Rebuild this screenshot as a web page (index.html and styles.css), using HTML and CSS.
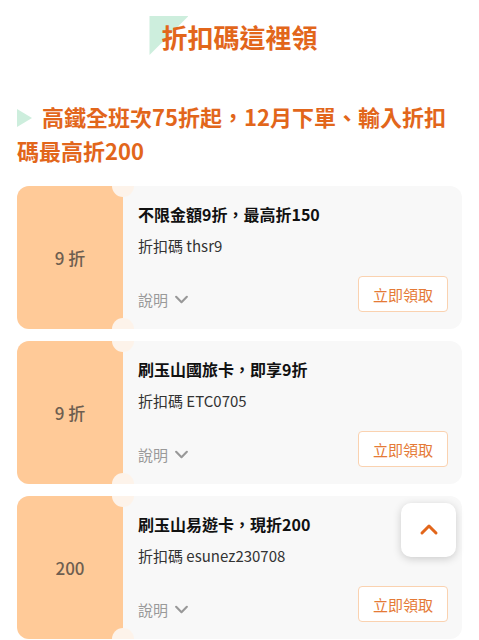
FILE: index.html
```html
<!DOCTYPE html>
<html lang="zh-Hant">
<head>
  <meta charset="UTF-8" />
  <meta name="viewport" content="width=device-width, initial-scale=1.0"/>
  <title>折扣碼這裡領</title>
  <link rel="stylesheet" href="styles.css">
</head>
<body>
  <h1 class="page-title"><span class="title-text">折扣碼這裡領</span></h1>

  <h2 class="promo"><span class="promo-mark"></span>高鐵全班次75折起，12月下單、輸入折扣碼最高折200</h2>

  <div class="coupons">
    <div class="coupon">
      <div class="coupon-value">9 折</div>
      <div class="coupon-body">
        <div class="coupon-name">不限金額9折，最高折150</div>
        <div class="coupon-code">折扣碼 thsr9</div>
        <div class="coupon-foot">
          <span class="more">說明
            <svg width="15" height="15" viewBox="0 0 14 14"><path d="M2 4.5l5 5 5-5" fill="none" stroke="#999" stroke-width="2" stroke-linecap="round" stroke-linejoin="round"/></svg>
          </span>
          <button class="claim">立即領取</button>
        </div>
      </div>
    </div>

    <div class="coupon">
      <div class="coupon-value">9 折</div>
      <div class="coupon-body">
        <div class="coupon-name">刷玉山國旅卡，即享9折</div>
        <div class="coupon-code">折扣碼 ETC0705</div>
        <div class="coupon-foot">
          <span class="more">說明
            <svg width="15" height="15" viewBox="0 0 14 14"><path d="M2 4.5l5 5 5-5" fill="none" stroke="#999" stroke-width="2" stroke-linecap="round" stroke-linejoin="round"/></svg>
          </span>
          <button class="claim">立即領取</button>
        </div>
      </div>
    </div>

    <div class="coupon">
      <div class="coupon-value">200</div>
      <div class="coupon-body">
        <div class="coupon-name">刷玉山易遊卡，現折200</div>
        <div class="coupon-code">折扣碼 esunez230708</div>
        <div class="coupon-foot">
          <span class="more">說明
            <svg width="15" height="15" viewBox="0 0 14 14"><path d="M2 4.5l5 5 5-5" fill="none" stroke="#999" stroke-width="2" stroke-linecap="round" stroke-linejoin="round"/></svg>
          </span>
          <button class="claim">立即領取</button>
        </div>
      </div>
    </div>
  </div>

  <button class="to-top" aria-label="回到頂端">
    <svg width="20" height="20" viewBox="0 0 20 20"><path d="M3 13l7-7 7 7" fill="none" stroke="#e2661b" stroke-width="3" stroke-linecap="round" stroke-linejoin="round"/></svg>
  </button>
</body>
</html>
```

FILE: styles.css
```css
body {
  margin: 0;
  font-family: "Noto Sans CJK TC", "Noto Sans", sans-serif;
  background: #fff;
  color: #222;
}

.page-title {
  margin: 16px 0 0;
  text-align: center;
  font-size: 26px;
  line-height: 39px;
  font-weight: 700;
  color: #e2661b;
}

.title-text {
  position: relative;
  display: inline-block;
  padding-top: 1px;
}

.title-text::before {
  content: "";
  position: absolute;
  left: -12px;
  top: 0;
  width: 39px;
  height: 39px;
  background: #cdeedd;
  clip-path: polygon(0 0, 100% 0, 0 100%);
  z-index: -1;
}

.promo {
  margin: 43px 0 0;
  padding: 0 20px 0 17px;
  font-size: 22px;
  line-height: 34px;
  font-weight: 700;
  color: #e2661b;
}

.promo-mark {
  display: inline-block;
  width: 15px;
  height: 18px;
  margin-right: 10px;
  background: #cdeedd;
  clip-path: polygon(0 0, 100% 50%, 0 100%);
  vertical-align: -1px;
}

.coupons {
  display: flex;
  flex-direction: column;
  gap: 12px;
  margin: 19px 17px 0;
}

.coupon {
  position: relative;
  display: flex;
  height: 143px;
  border-radius: 12px;
  overflow: hidden;
  background: #f8f8f8;
}

.coupon::before,
.coupon::after {
  content: "";
  position: absolute;
  left: 95px;
  width: 22px;
  height: 22px;
  border-radius: 50%;
  background: #fdf3ea;
}

.coupon::before {
  top: -11px;
}

.coupon::after {
  bottom: -11px;
}

.coupon-value {
  width: 106px;
  flex-shrink: 0;
  display: flex;
  align-items: center;
  justify-content: center;
  background: #ffca98;
  color: #6e5e50;
  font-size: 17px;
  font-weight: 500;
}

.coupon-body {
  flex: 1;
  display: flex;
  flex-direction: column;
  padding: 17px 14px 17px 15px;
}

.coupon-name {
  font-size: 16px;
  line-height: 22px;
  font-weight: 700;
  color: #111;
}

.coupon-code {
  margin-top: 10px;
  font-size: 15px;
  line-height: 22px;
  color: #333;
}

.coupon-foot {
  margin-top: auto;
  display: flex;
  justify-content: space-between;
  align-items: center;
}

.more {
  display: flex;
  align-items: center;
  gap: 6px;
  margin-top: 10px;
  font-size: 15px;
  color: #9a9a9a;
}

.claim {
  height: 36px;
  padding: 0 14px;
  font-family: inherit;
  font-size: 15px;
  color: #e57a36;
  background: #fff;
  border: 1px solid #fad2b0;
  border-radius: 4px;
}

.to-top {
  position: fixed;
  right: 23px;
  bottom: 83px;
  width: 55px;
  height: 54px;
  display: flex;
  align-items: center;
  justify-content: center;
  padding: 0;
  background: #fff;
  border: none;
  border-radius: 10px;
  box-shadow: 0 2px 8px rgba(0, 0, 0, 0.18);
}
```
